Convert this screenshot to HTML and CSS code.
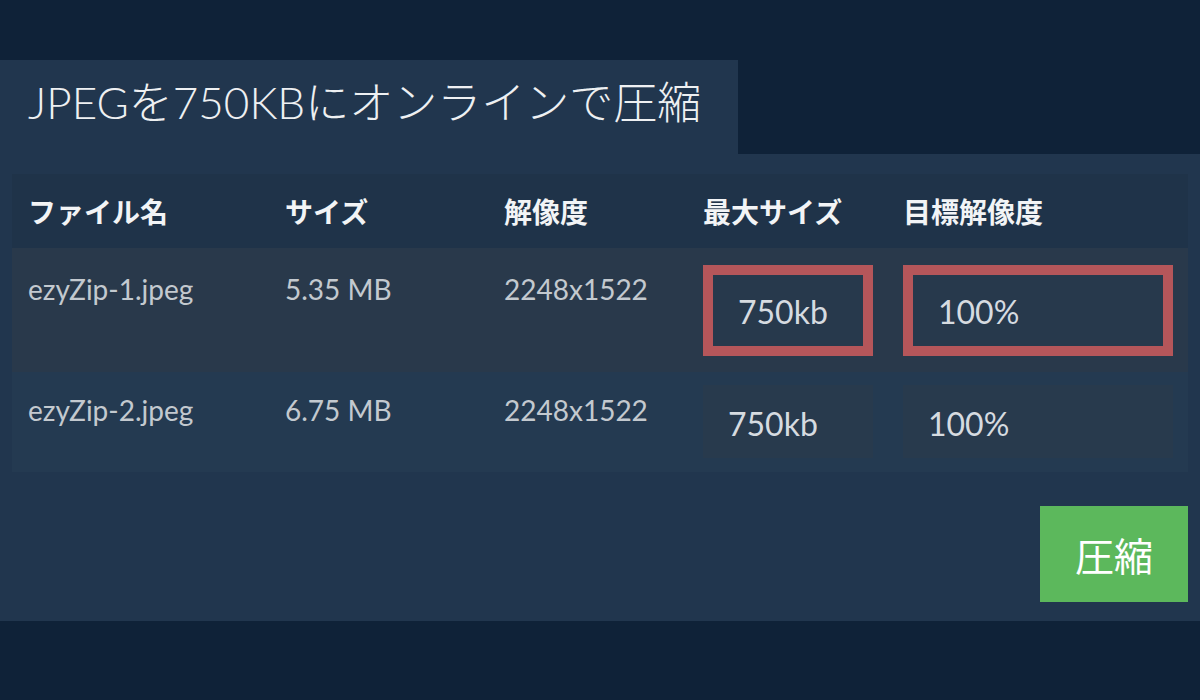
FILE: index.html
```html
<!DOCTYPE html>
<html lang="ja">
<head>
  <meta charset="UTF-8">
  <meta name="viewport" content="width=device-width, initial-scale=1.0">
  <title>JPEGを750KBにオンラインで圧縮</title>
  <link rel="stylesheet" href="styles.css">
</head>
<body>
  <div class="page">
    <h1 class="title">JPEGを750KBにオンラインで圧縮</h1>
    <div class="panel">
      <div class="files">
        <div class="row head">
          <div class="cell">ファイル名</div>
          <div class="cell">サイズ</div>
          <div class="cell">解像度</div>
          <div class="cell">最大サイズ</div>
          <div class="cell">目標解像度</div>
        </div>
        <div class="row first">
          <div class="cell text">ezyZip-1.jpeg</div>
          <div class="cell text">5.35 MB</div>
          <div class="cell text">2248x1522</div>
          <div class="cell"><div class="field small hl">750kb</div></div>
          <div class="cell"><div class="field wide hl">100%</div></div>
        </div>
        <div class="row second">
          <div class="cell text">ezyZip-2.jpeg</div>
          <div class="cell text">6.75 MB</div>
          <div class="cell text">2248x1522</div>
          <div class="cell"><div class="field small">750kb</div></div>
          <div class="cell"><div class="field wide">100%</div></div>
        </div>
      </div>
      <div class="actions">
        <button class="compress">圧縮</button>
      </div>
    </div>
  </div>
</body>
</html>
```

FILE: styles.css
```css
body {
  margin: 0;
  background-color: #0f2238;
  font-family: Lato, "Noto Sans CJK JP", sans-serif;
}

.page {
  padding-top: 60px;
}

.title {
  box-sizing: border-box;
  width: 738px;
  height: 94px;
  margin: 0;
  padding: 0 0 10px 28px;
  background-color: #21364e;
  color: #eef0f2;
  font-size: 44px;
  font-weight: 300;
  line-height: 84px;
  white-space: nowrap;
}

.panel {
  background-color: #21364e;
  padding: 20px 12px 19px;
}

.row {
  display: grid;
  grid-template-columns: 257px 219px 199px 200px 301px;
  box-sizing: border-box;
}

.cell {
  padding-left: 16px;
}

.head {
  height: 74px;
  align-items: center;
  background-color: #1f3349;
  color: #f2f4f6;
  font-family: "Noto Sans CJK JP", sans-serif;
  font-size: 28px;
  font-weight: 700;
}

.first {
  height: 124px;
  padding-top: 17px;
  background-color: #29394b;
}

.second {
  height: 100px;
  padding-top: 13px;
  background-color: #243a51;
}

.text {
  color: #c3c9cf;
  font-size: 28px;
  line-height: 30px;
}

.first .text {
  padding-top: 9px;
}

.second .text {
  padding-top: 10px;
}

.field {
  box-sizing: border-box;
  height: 73px;
  padding: 2px 25px 0;
  background-color: #283a4d;
  color: #d6dbe0;
  font-size: 32px;
  line-height: 73px;
}

.small {
  width: 170px;
}

.wide {
  width: 270px;
}

.hl {
  height: 91px;
  border: 10px solid #b5565a;
  background-color: #27394c;
  line-height: 69px;
}

.actions {
  display: flex;
  justify-content: flex-end;
  margin-top: 34px;
}

.compress {
  width: 148px;
  height: 96px;
  border: none;
  background-color: #5cb85c;
  color: #fff;
  font-family: "Noto Sans CJK JP", sans-serif;
  font-size: 39px;
  cursor: pointer;
}
```
